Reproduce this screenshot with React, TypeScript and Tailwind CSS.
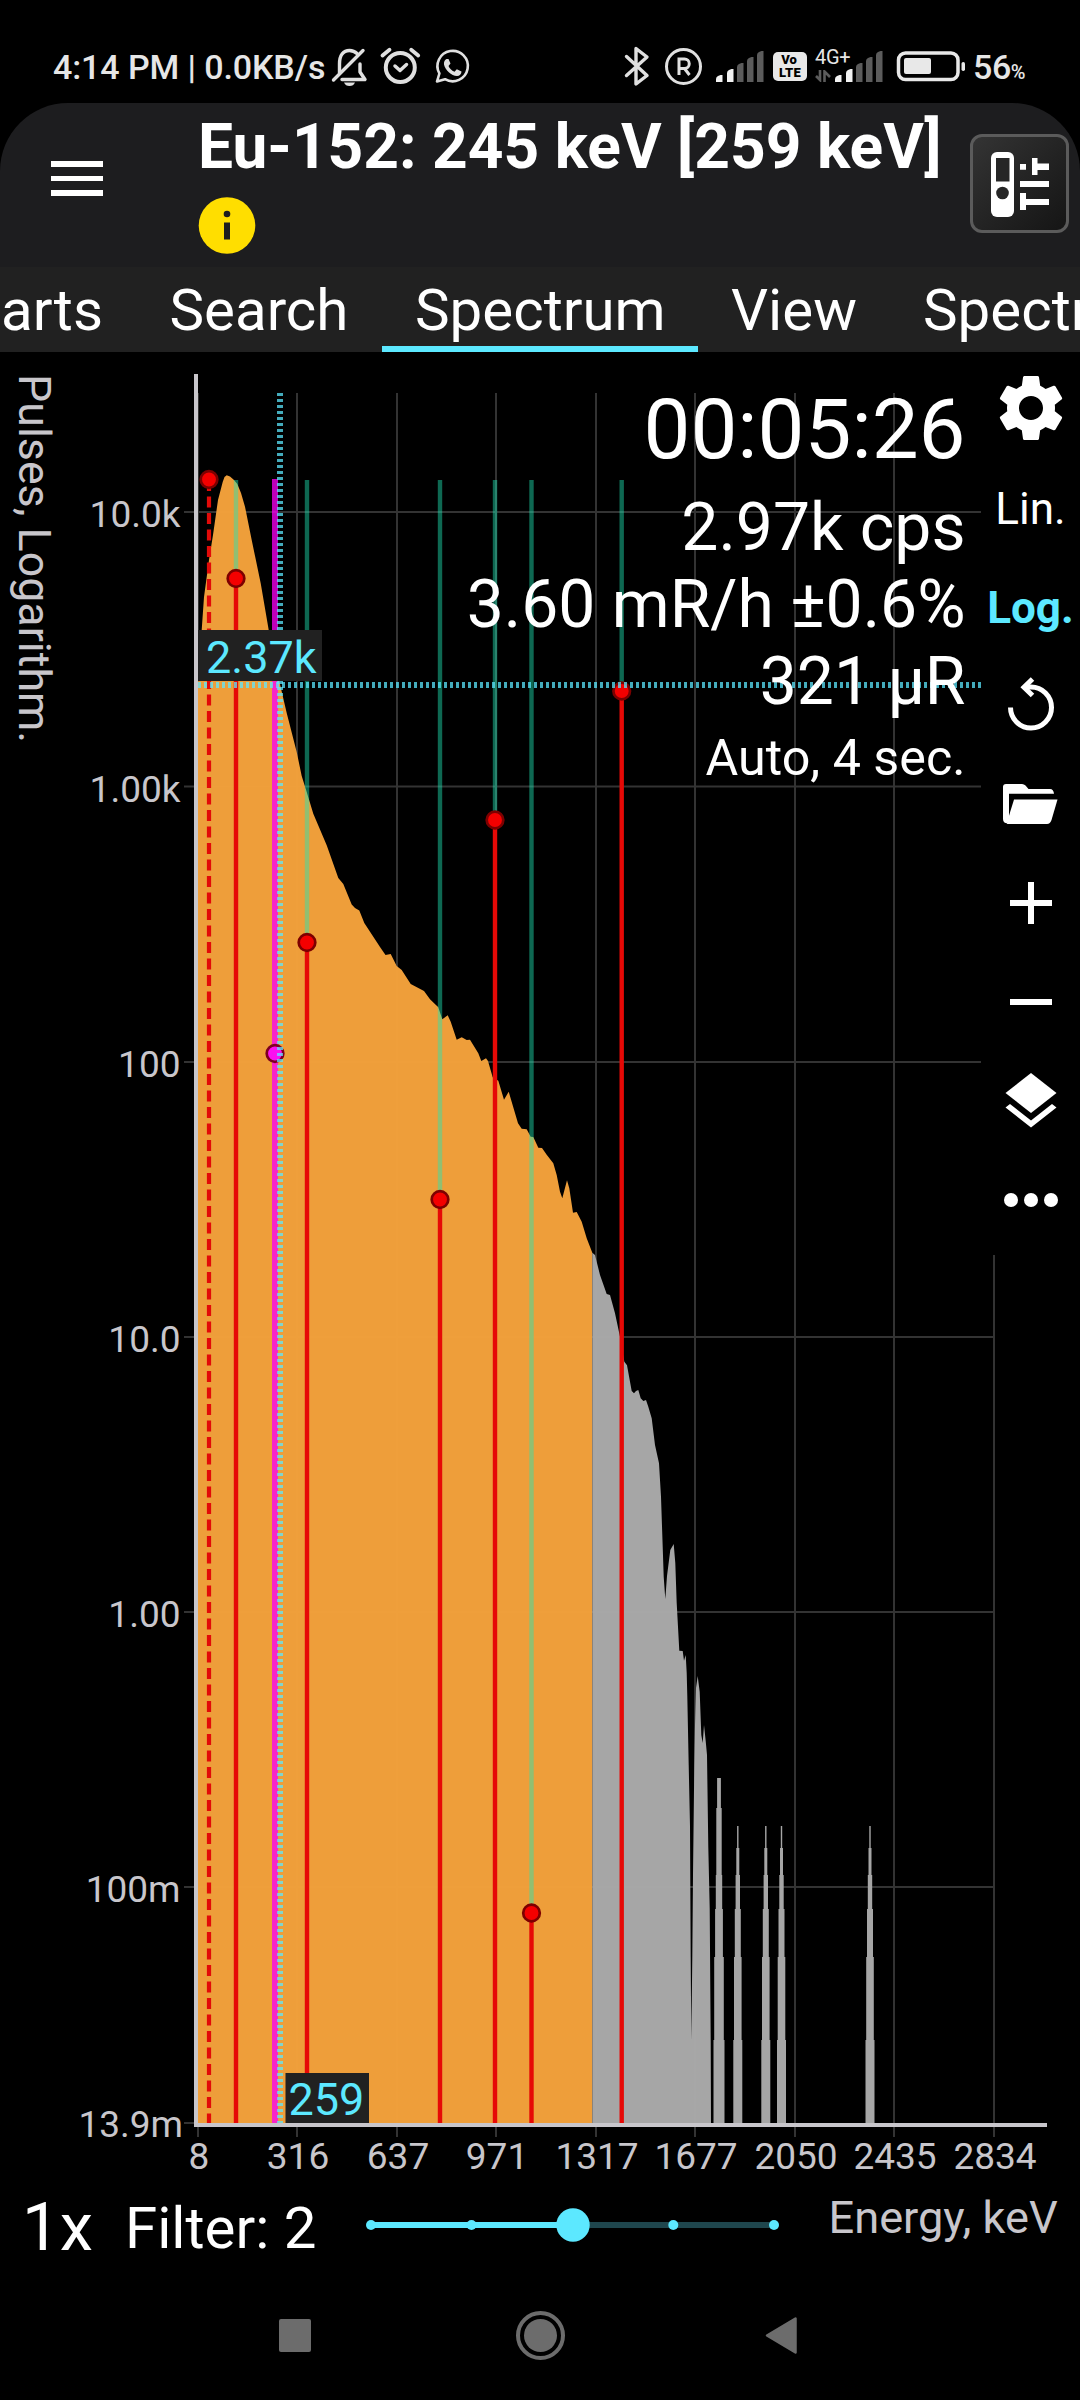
import React from "react";
import { MdSettings } from "react-icons/md";

const CYAN = "#5ce8ff";

/* ---------- status bar ---------- */

function Signal() {
  const bars = [
    { x: 0, h: 7, on: true },
    { x: 11, h: 13, on: true },
    { x: 21, h: 19, on: false },
    { x: 31, h: 25, on: false },
    { x: 41, h: 31, on: false },
  ];
  return (
    <svg width="48" height="31" viewBox="0 0 48 31" className="block">
      {bars.map((b) => (
        <path
          key={b.x}
          d={`M${b.x} 31 V${31 - b.h + 4} Q${b.x} ${31 - b.h + 2} ${b.x + 2} ${31 - b.h + 1} L${b.x + 4.5} ${31 - b.h} H${b.x + 6.5} V31 Z`}
          fill={b.on ? "#f2f2f2" : "#5c5c5c"}
        />
      ))}
    </svg>
  );
}

function StatusBar() {
  return (
    <div className="relative flex h-[103px] items-start text-[#e6e6e6]">
      <div className="ml-[53px] mt-[47px] w-[278px] whitespace-nowrap text-[34px] font-medium leading-[40px] tracking-[-0.1px]">
        4:14 PM | 0.0KB/s
      </div>
      <svg width="140" height="44" viewBox="332 44 140 44" className="mt-[44px] block" fill="none">
        <g stroke="#e0e0e0" strokeWidth="3.4" strokeLinejoin="round" strokeLinecap="round">
          <path d="M340.500 73 V64 C340.500 55 344.500 50.500 350.500 50.500 C353.500 50.500 356 51.500 358 53.500" />
          <path d="M361 64 V72 L366 79.500 H343" />
          <path d="M334.500 80 L364 50.500" />
        </g>
        <path d="M345 82.500 H356 Q354.500 86 350.500 86 Q346.500 86 345 82.500Z" fill="#e0e0e0" />
        <g stroke="#e0e0e0" strokeLinecap="round" strokeLinejoin="round">
          <circle cx="401.300" cy="67.500" r="14.500" strokeWidth="4" />
          <path d="M396 66 L401 70.500 L407.500 64.500" strokeWidth="3.500" />
          <path d="M383.500 55.500 L390.500 49.800 M419.200 55.500 L412.200 49.800" strokeWidth="3.800" />
        </g>
        <path
          d="M438 81.500 L440.400 73.500 A15.200 15.200 0 1 1 446 79.200 Z"
          stroke="#e0e0e0"
          strokeWidth="2.600"
          strokeLinejoin="round"
        />
        <path
          d="M447.500 59 C446 59.500 444.500 62 445 64.500 C446 70 452.500 76 458 76 C460.500 76 462.500 74 462.500 71.500 L457.800 69.200 L455.500 71.700 C452.500 70.500 450.500 68.300 449.500 66 L451.500 63.500 L449.500 59 Z"
          fill="#e0e0e0"
        />
      </svg>
      <svg width="80" height="44" viewBox="624 44 80 44" className="ml-[153px] mt-[44px] block" fill="none" stroke="#e0e0e0">
        <path d="M626.500 56.500 L647 75.500 L636 84 V48.500 L647 57 L626.500 75.500" strokeWidth="3.400" strokeLinejoin="round" strokeLinecap="round" />
        <circle cx="683.500" cy="66.500" r="17" strokeWidth="3" />
        <path d="M679 75 V59 H684.500 A4.500 4.500 0 0 1 684.500 68.500 H679 M684.500 68.500 L689.500 75" strokeWidth="3" />
      </svg>
      <div className="ml-[12px] mt-[51px]">
        <Signal />
      </div>
      <div className="ml-[9px] mt-[52px] flex h-[29px] w-[34px] flex-col items-center justify-center rounded-[5px] bg-[#e8e8e8] text-[13px] font-black leading-[12.500px] text-black">
        <span className="-ml-[2px]">Vo</span>
        <span className="tracking-[0.200px]">LTE</span>
      </div>
      <div className="ml-[8px] mt-[47px] w-[20px]">
        <div className="whitespace-nowrap text-[20px] leading-[20px] tracking-[-0.300px]">4G+</div>
        <svg width="17" height="12" viewBox="0 0 17 12" className="mt-[3px] block" stroke="#5c5c5c" strokeWidth="2.600" fill="none">
          <path d="M1 6 L5 10 V0 M9.500 12 V1.500 L15 7" />
        </svg>
      </div>
      <div className="mt-[51px]">
        <Signal />
      </div>
      <svg width="70" height="32" viewBox="896 50 70 32" className="ml-[13px] mt-[50px] block">
        <rect x="898.500" y="53" width="59.500" height="26.500" rx="7" fill="none" stroke="#e8e8e8" strokeWidth="3.500" />
        <rect x="904" y="58" width="27" height="16" rx="2" fill="#e8e8e8" />
        <rect x="961.500" y="62" width="3.500" height="9" rx="1.700" fill="#e8e8e8" />
      </svg>
      <div className="ml-[7px] mt-[47px] whitespace-nowrap text-[34px] font-medium leading-[40px] tracking-[-0.400px]">
        56<span className="text-[20px]">%</span>
      </div>
    </div>
  );
}

/* ---------- header ---------- */

function Header() {
  return (
    <header className="flex h-[164px] items-start rounded-t-[68px] bg-[#1d1d1f]">
      <div className="ml-[51px] mt-[58px] flex w-[52px] flex-col gap-[9px]">
        <div className="h-[5.700px] bg-white" />
        <div className="h-[5.700px] bg-white" />
        <div className="h-[5.700px] bg-white" />
      </div>
      <div className="ml-[95px] mt-[8px] w-[772px]">
        <h1 className="whitespace-nowrap text-[62.250px] font-bold leading-[72px] text-white">
          Eu-152: 245 keV [259 keV]
        </h1>
        <svg width="58" height="58" viewBox="0 0 58 58" className="mt-[13px] block">
          <circle cx="29" cy="29.500" r="28.300" fill="#ffde00" />
          <circle cx="29" cy="18" r="3.300" fill="#1d1d1f" />
          <rect x="26" y="26.500" width="6" height="17" fill="#1d1d1f" />
        </svg>
      </div>
      <div className="mt-[31px] flex h-[99px] w-[99px] items-center justify-center rounded-[12px] border-[3px] border-[#5b5b5b] bg-linear-to-br from-[#343434] to-[#151515]">
        <svg width="60" height="68" viewBox="990 149 60 68" className="block">
          <rect x="991" y="151" width="23" height="65" rx="6" fill="#fff" />
          <rect x="996" y="157" width="13.500" height="23.500" fill="#262626" />
          <circle cx="1002.500" cy="192" r="6.300" fill="#262626" />
          <path
            d="M1020 163h6v5.700h-6z M1032 157h5.500v5.500H1049v6.500h-11.500v5H1032z M1020 180h29v6h-29z M1020 192h6v6h23v6h-23v5h-6z"
            fill="#fff"
          />
        </svg>
      </div>
    </header>
  );
}

function Tabs() {
  return (
    <nav className="flex h-[85px] overflow-hidden whitespace-nowrap bg-[#212121] text-[58.250px] leading-[87px] text-white">
      <div className="w-[136px] pl-px">arts</div>
      <div className="w-[246px] pl-[33.500px]">Search</div>
      <div className="w-[316px] border-b-[6px] border-[#5ce8ff] pl-[33px]">Spectrum</div>
      <div className="w-[191px] pl-[33px]">View</div>
      <div className="w-[191px] pl-[34px]">Spectrum</div>
    </nav>
  );
}

/* ---------- chart ---------- */

const GRID_Y = [512, 786.500, 1062, 1337, 1612, 1887];
const GRID_X = [297, 397, 496, 596, 695, 795, 894, 994];
const Y_LABELS = ["10.0k", "1.00k", "100", "10.0", "1.00", "100m"];
const X_LABELS = ["316", "637", "971", "1317", "1677", "2050", "2435", "2834"];

const IN_RANGE =
  "M198 2123 V683 L200 650 201.700 630 204 597 209 560 213 535 218 500 222.700 482 224.500 477 226.700 475.300 230 476.500 234 480 237.300 484 241 493 245 506.700 251.700 540 260.700 583.300 268.700 630 279.700 683 286.700 713 296.700 752 301.700 776 306.700 792 313.300 813.700 326.700 845.300 338.300 878 343.300 884 351.700 904.600 355 908 359.300 910.500 364.300 923 380 947 385.500 955 390.700 954 396.700 966 401.700 970 410.700 984 424 991 430 999.300 438.300 1007.300 442.300 1019.300 447.700 1015.300 450.700 1021.700 456.700 1039.700 461.700 1037.300 466.700 1040 470 1039.700 478.300 1053.300 481.300 1061 486 1058.300 488 1061 492.700 1077.300 498.300 1080.700 504 1099.700 508.700 1091.700 518 1123.300 521.700 1128.700 526.700 1129.300 530.700 1136.700 533.300 1137 538.300 1147.700 542 1148 546.700 1154.700 553.300 1163.300 556.700 1175 560 1191.700 562.300 1198.300 567 1180.300 569.300 1188.300 573 1212.700 576.700 1212 581.700 1221.700 586.700 1238.300 592.300 1252.700 V2123Z";

const OUT_RANGE =
  "M592.300 2123 V1252.700 L595 1255 600 1275 606.700 1294 610 1295 615 1313.300 620 1336.700 624.300 1361.700 627 1365.300 631.700 1391 634 1393.300 636 1391 638.300 1390 640.700 1398.300 643.300 1401 646 1400 648.300 1406.700 651.700 1418.300 655 1445 659 1463.300 661 1496.700 662.700 1546.700 663.700 1576.700 665.300 1599 667 1576 670.300 1550 673.700 1544 675.300 1563 676.700 1603 679.300 1650.700 682.700 1651 684 1660.700 685.700 1655 686.700 1673 687.300 1696 688.700 1765 690 1826 690.700 1957 691.300 2040 692.300 1957 693 1875 694.300 1765 695 1725 696 1688 697.700 1676 699.700 1692 701.300 1735 702.700 1743 704 1725 705.700 1741 707 1755 708.300 1847 709.700 1908 710.700 2041 711 2123Z";

const WIDE_STEPS = [[1778, 1.900], [1808, 2.700], [1875, 3.200], [1909, 3.900], [1957, 4.800], [2040, 5.500]];
const THIN_STEPS = [[1826, 0.700], [1848, 1.500], [1875, 2.200], [1909, 3], [1957, 3.800], [2040, 4.500]];
const SPIKES = [
  { x: 719, steps: WIDE_STEPS },
  { x: 737.800, steps: THIN_STEPS },
  { x: 765.800, steps: THIN_STEPS },
  { x: 781.500, steps: THIN_STEPS },
  { x: 870, steps: THIN_STEPS },
];

function spikePath(x: number, steps: number[][]) {
  const left = [...steps].reverse().map(([y, w]) => `H${x - w} V${y}`);
  const right = steps.map(([, w], i) => `H${x + w} V${i + 1 < steps.length ? steps[i + 1][0] : 2123}`);
  return `M${x} 2123 ${left.join(" ")} ${right.join(" ")}Z`;
}

const LINES = [
  { x: 236, y: 578.500 },
  { x: 307, y: 942.500 },
  { x: 440, y: 1199.500 },
  { x: 495, y: 820 },
  { x: 531.500, y: 1913 },
  { x: 621.700, y: 691 },
];

function Chart() {
  return (
    <svg width="1080" height="1828" viewBox="0 352 1080 1828" className="block">
      <g stroke="#333333" strokeWidth="2">
        {GRID_Y.map((y) => (
          <path key={y} d={`M184 ${y}H994`} />
        ))}
        {GRID_X.map((x) => (
          <path key={x} d={`M${x} 393V2137`} />
        ))}
        <path d="M198 393V2137 M184 2123H194" />
      </g>

      <g fillOpacity="0.980">
        <path d={IN_RANGE} fill="#f3a13b" />
        <path d={OUT_RANGE} fill="#a9a9a9" />
        {SPIKES.map((s) => (
          <path key={s.x} d={spikePath(s.x, s.steps)} fill="#a9a9a9" />
        ))}
      </g>

      <g stroke="#c8c6cb" strokeWidth="4" fill="none">
        <path d="M196 374V2125H1047" />
      </g>

      {LINES.map((l) => (
        <path key={l.x} d={`M${l.x} 480V${l.y}`} stroke="#1fe7b6" strokeOpacity="0.450" strokeWidth="4.400" />
      ))}
      <path d="M209 480V2123" stroke="#e20a08" strokeWidth="4.200" strokeDasharray="11 5.500" />
      <path d="M275 479V2123" stroke="#fa00f5" strokeOpacity="0.760" strokeWidth="6" />
      {LINES.map((l) => (
        <path key={l.x} d={`M${l.x} ${l.y}V2123`} stroke="#e60906" strokeWidth="4.400" />
      ))}
      {[{ x: 209, y: 479.500 }, ...LINES].map((l) => (
        <circle key={l.x} cx={l.x} cy={l.y} r="8.300" fill="#f40000" stroke="#7d0000" strokeWidth="2.700" />
      ))}
      <circle cx="275" cy="1053.500" r="8.300" fill="#fb10f0" stroke="#7d0020" strokeWidth="2.700" />

      <g stroke={CYAN} strokeOpacity="0.740" strokeWidth="6" strokeDasharray="3 3">
        <path d="M280 393V2123" />
        <path d="M198 685H981" />
      </g>

      <rect x="198" y="630" width="124" height="51" fill="#212121" />
      <rect x="285.500" y="2073" width="83.500" height="50" fill="#212121" />
      <g fill={CYAN} fontSize="45">
        <text x="206" y="672.700">2.37k</text>
        <text x="288.500" y="2115">259</text>
      </g>

      <g fill="#c8c6cb" fontSize="37">
        {Y_LABELS.map((t, i) => (
          <text key={t} x="180.500" y={GRID_Y[i] + 15} textAnchor="end">
            {t}
          </text>
        ))}
        <text x="183" y="2137" textAnchor="end">
          13.9m
        </text>
        <text x="199" y="2168.500" textAnchor="middle">
          8
        </text>
        {X_LABELS.map((t, i) => (
          <text key={t} x={GRID_X[i] + 1} y="2168.500" textAnchor="middle">
            {t}
          </text>
        ))}
      </g>
      <text transform="translate(19 374) rotate(90)" fontSize="44.750" fill="#c8c6cb">
        Pulses, Logarithm.
      </text>
    </svg>
  );
}

function Readout() {
  return (
    <div className="absolute right-[114.500px] top-0 whitespace-nowrap text-right text-white">
      <div className="mt-[30px] text-[83.500px] leading-[96px]">00:05:26</div>
      <div className="mt-[11px] text-[66px] leading-[77px]">2.97k cps</div>
      <div className="text-[66px] leading-[77px]">3.60 mR/h ±0.6%</div>
      <div className="text-[66px] leading-[77px]">321 µR</div>
      <div className="mt-[9px] text-[50.250px] leading-[58px]">Auto, 4 sec.</div>
    </div>
  );
}

function Cell({ children }: { children: React.ReactNode }) {
  return <div className="flex h-[99px] w-full items-center justify-center">{children}</div>;
}

function Toolbar() {
  return (
    <div className="absolute left-[981px] top-0 flex h-[903px] w-[99px] flex-col items-center bg-black pt-[6.500px] text-[44px] text-white">
      <Cell>
        <MdSettings size={80} />
      </Cell>
      <Cell>
        <span className="pt-[3px]">Lin.</span>
      </Cell>
      <Cell>
        <span className="pt-[3px] font-bold text-[#5ce8ff]">Log.</span>
      </Cell>
      <Cell>
        <svg width="60" height="60" viewBox="1001 676 60 60" fill="none" stroke="#fff" strokeWidth="5">
          <path d="M1010.500 708.500 A20.500 20.500 0 1 0 1031 688 H1025" />
          <path d="M1032.500 680 L1024 688.200 L1032.500 696.500" />
        </svg>
      </Cell>
      <Cell>
        <svg width="60" height="60" viewBox="1001 774 60 60" fill="#fff">
          <path d="M1006 784 H1022 Q1024 784 1025.500 785.500 L1028.500 789 H1050 Q1053.500 789 1054 793.800 H1009 V818 L1007.500 823.500 Q1003 823 1003 819 V787 Q1003 784 1006 784Z" />
          <path d="M1014 799.500 H1057.500 L1051.500 820 Q1050.200 824 1047 824 H1007 L1008 819Z" />
        </svg>
      </Cell>
      <Cell>
        <svg width="42" height="42" viewBox="0 0 42 42" fill="#fff">
          <path d="M18 0h6v18h18v6H24v18h-6V24H0v-6h18z" />
        </svg>
      </Cell>
      <Cell>
        <div className="h-[6px] w-[42px] bg-white" />
      </Cell>
      <Cell>
        <svg width="60" height="60" viewBox="1001 1071 60 60" fill="#fff">
          <path d="M1031 1073 L1056.500 1093 L1031 1113 L1005.500 1093Z" />
          <path d="M1005.500 1107.500 L1010 1104 L1031 1120.500 L1052 1104 L1056.500 1107.500 L1031 1127.500Z" />
        </svg>
      </Cell>
      <Cell>
        <div className="flex gap-[6px]">
          <div className="h-[14px] w-[14px] rounded-full bg-white" />
          <div className="h-[14px] w-[14px] rounded-full bg-white" />
          <div className="h-[14px] w-[14px] rounded-full bg-white" />
        </div>
      </Cell>
    </div>
  );
}

/* ---------- bottom ---------- */

function FilterRow() {
  return (
    <div className="flex h-[100px] items-start whitespace-nowrap text-white">
      <div className="ml-[22px] mt-[9px] w-[102px] text-[67px] leading-[77px]">1x</div>
      <div className="mt-[14px] w-[234px] pl-px text-[58.250px] leading-[68px]">Filter: 2</div>
      <svg width="432" height="50" viewBox="358 2200 432 50" className="mt-[20px] block">
        <path d="M371 2225H774" stroke="#1f464d" strokeWidth="6" />
        <path d="M371 2225H573" stroke={CYAN} strokeWidth="6" />
        {[371, 471.500, 673.300, 774].map((x) => (
          <circle key={x} cx={x} cy="2225" r="5" fill={CYAN} />
        ))}
        <circle cx="573" cy="2225" r="16.700" fill={CYAN} />
      </svg>
      <div className="ml-[38.500px] mt-[12px] text-[45.200px] leading-[52px] text-[#c8c6cb]">Energy, keV</div>
    </div>
  );
}

function NavBar() {
  return (
    <div className="flex h-[120px] items-start">
      <div className="ml-[279px] mt-[39px] h-[33px] w-[32px] rounded-[2px] bg-[#6c6c6c]" />
      <div className="ml-[205px] mt-[31px] flex h-[49px] w-[49px] items-center justify-center rounded-full border-4 border-[#6c6c6c]">
        <div className="h-[33px] w-[33px] rounded-full bg-[#6c6c6c]" />
      </div>
      <svg width="32" height="38" viewBox="765 2316 32 38" className="ml-[200px] mt-[36px] block">
        <path d="M767 2335.500 L795.500 2318.500 V2352.500Z" fill="#6c6c6c" stroke="#6c6c6c" strokeWidth="2.500" strokeLinejoin="round" />
      </svg>
    </div>
  );
}

export default function App() {
  return (
    <div className="flex h-[2400px] w-[1080px] flex-col overflow-hidden bg-black font-['Roboto',sans-serif]">
      <StatusBar />
      <Header />
      <Tabs />
      <main className="relative h-[1828px]">
        <Chart />
        <Readout />
        <Toolbar />
      </main>
      <FilterRow />
      <NavBar />
    </div>
  );
}
